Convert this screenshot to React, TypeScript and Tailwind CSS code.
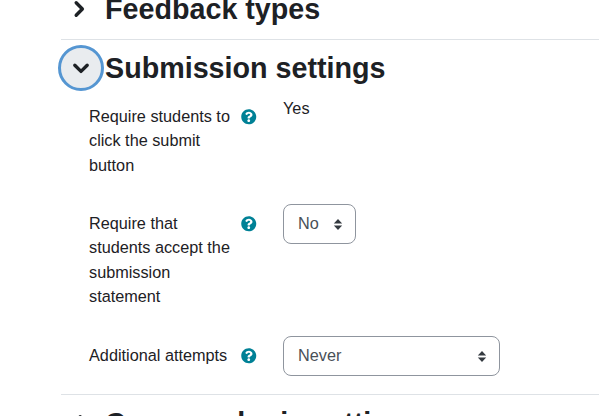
function Help() {
  return (
    <svg viewBox="0 0 512 512" className="w-[15.500px] h-[15.500px] shrink-0" style={{ fill: "#008196" }}>
      <path d="M504 256c0 137-111 248-248 248S8 393 8 256 119 8 256 8s248 111 248 248zM262.700 90c-54.500 0-89.200 23-116.500 63.700-3.500 5.300-2.300 12.400 2.800 16.200l34.700 26.300c5.200 3.900 12.600 3 16.700-2.100 17.900-22.700 30.100-35.800 57.300-35.800 20.400 0 45.700 13.100 45.700 32.900 0 15-12.400 22.700-32.500 34-23.500 13.200-54.600 29.600-54.600 70.700V300c0 6.600 5.400 12 12 12h56c6.600 0 12-5.400 12-12v-1.300c0-28.400 83.100-29.600 83.100-106.700 0-58.100-60.200-102-116.600-102zM256 338c-25.400 0-46 20.600-46 46s20.600 46 46 46 46-20.600 46-46-20.600-46-46-46z" />
    </svg>
  );
}

function Arrows() {
  return (
    <svg viewBox="0 0 10 14" className="w-[10px] h-[13px]">
      <path d="M5 1 L9.500 5.800 H0.500 Z M5 13 L0.500 8.200 H9.500 Z" fill="#343a40" />
    </svg>
  );
}

function Chevron({ down }: { down?: boolean }) {
  return (
    <svg viewBox="0 0 16 16" className="w-[18px] h-[18px]" fill="none" stroke="#1d2125" strokeWidth="3" strokeLinecap="round" strokeLinejoin="round">
      {down ? <path d="M2.500 5.500 8 11l5.500-5.500" /> : <path d="M5.500 2.500 11 8l-5.500 5.500" />}
    </svg>
  );
}

export default function App() {
  return (
    <div className="w-[599px] h-[416px] overflow-hidden bg-white pl-[61px] text-[16.25px] font-['Liberation_Sans',Arial,sans-serif]">
      <section className="h-[40px] border-b border-[#dee2e6] flex items-center">
        <span className="w-[44px] h-[46px] flex items-center justify-center -mt-[22px] -ml-[4px] mr-[4px]"><Chevron /></span>
        <h3 className="text-[28.7px] font-bold leading-[34px] text-[#1d2125] -mt-[21px]">Feedback types</h3>
      </section>

      <section className="border-b border-[#dee2e6] h-[355px]">
        <div className="flex items-center h-[56px]">
          <button className="w-[46px] h-[46px] -ml-[3px] mr-[1px] rounded-full bg-[#e9ecef] border-[3px] border-[#5596d2] flex items-center justify-center">
            <Chevron down />
          </button>
          <h3 className="text-[28.7px] font-bold leading-[34px] text-[#1d2125]">Submission settings</h3>
        </div>

        <div className="flex pl-[28px] h-[108px]">
          <div className="w-[146px] mr-[6px] shrink-0 text-[#1d2125] leading-[24.4px] mt-[8px]">Require students to click the submit button</div>
          <div className="w-[42px] shrink-0 mt-[13px]"><Help /></div>
          <div className="text-[#1d2125] leading-[24px]">Yes</div>
        </div>

        <div className="flex pl-[28px] h-[132px]">
          <div className="w-[146px] mr-[6px] shrink-0 text-[#1d2125] leading-[24.4px] mt-[7px]">Require that students accept the submission statement</div>
          <div className="w-[42px] shrink-0 mt-[12px]"><Help /></div>
          <div className="w-[73px] h-[40px] rounded-[8px] border border-[#8f959e] flex items-center justify-between pl-[14px] pr-[12px] text-[#495057]">
            <span className="-mt-[1px]">No</span><Arrows />
          </div>
        </div>

        <div className="flex pl-[28px]">
          <div className="w-[146px] mr-[6px] shrink-0 text-[#1d2125] leading-[24.4px] mt-[7px]">Additional attempts</div>
          <div className="w-[42px] shrink-0 mt-[12px]"><Help /></div>
          <div className="w-[217px] h-[40px] rounded-[8px] border border-[#8f959e] flex items-center justify-between pl-[14px] pr-[12px] text-[#495057]">
            <span className="-mt-[1px]">Never</span><Arrows />
          </div>
        </div>
      </section>

      <section className="flex items-center h-[56px]">
        <span className="w-[44px] flex items-center justify-center"><Chevron /></span>
        <h3 className="text-[28.7px] font-bold leading-[34px] text-[#1d2125]">Common logic settings</h3>
      </section>
    </div>
  );
}
